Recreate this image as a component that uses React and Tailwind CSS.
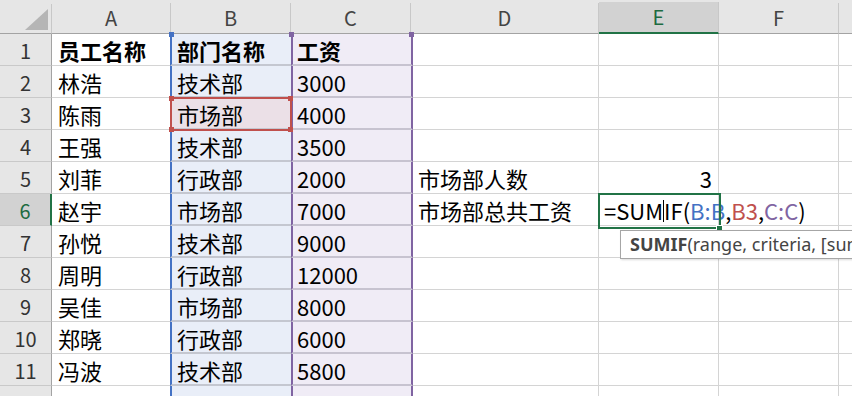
import React from "react";

const data = [
  ["员工名称", "部门名称", "工资"],
  ["林浩", "技术部", "3000"],
  ["陈雨", "市场部", "4000"],
  ["王强", "技术部", "3500"],
  ["刘菲", "行政部", "2000"],
  ["赵宇", "市场部", "7000"],
  ["孙悦", "技术部", "9000"],
  ["周明", "行政部", "12000"],
  ["吴佳", "市场部", "8000"],
  ["郑晓", "行政部", "6000"],
  ["冯波", "技术部", "5800"],
  ["", "", ""],
];

function ColHeader({ label, w, active }) {
  return (
    <div className={`${w} h-[34px] shrink-0 flex flex-col`}>
      <div className="h-[4px]" />
      <div
        className={`flex-1 flex items-center justify-center text-[20px] border-r border-r-[#c8c8c8] ${
          active
            ? "bg-[#d2d2d2] text-[#1e6b41] border-b-2 border-b-[#217346]"
            : "text-[#444] border-b border-b-[#a3a3a3]"
        }`}
      >
        {label}
      </div>
    </div>
  );
}

function Row({ n, cells }) {
  const bold = n === 1;
  const active = n === 6;
  const txt = `flex items-center pt-[2px] whitespace-nowrap text-[22px] text-black ${bold ? "font-bold" : ""}`;
  return (
    <div className="flex h-[32px]">
      <div
        className={`w-[52px] shrink-0 flex items-center justify-center pt-[2px] text-[20px] border-b border-b-[#c9c9c9] ${
          active
            ? "bg-[#d2d2d2] text-[#1e6b41] border-r-2 border-r-[#217346]"
            : "bg-[#e6e6e6] text-[#333] border-r border-r-[#a3a3a3]"
        }`}
      >
        {n}
      </div>
      <div className={`w-[118px] shrink-0 pl-[6px] border-b border-b-[#d4d4d4] ${txt}`}>{cells[0]}</div>
      <div
        className={`w-[121px] shrink-0 pl-[5px] border-l-2 border-l-[#4472c4] border-b-2 border-b-[#c4c7d0] ${
          n === 3 ? "bg-[#ebe0e7]" : "bg-[#e9eef8]"
        } ${txt}`}
      >
        {cells[1]}
      </div>
      <div className={`w-[122px] shrink-0 pl-[4px] bg-[#f0ecf6] border-x-2 border-x-[#8064a2] border-b-2 border-b-[#c7c3d0] ${txt}`}>
        {cells[2]}
      </div>
      <div className={`w-[186px] shrink-0 pl-[5px] border-r border-b border-[#d4d4d4] ${txt}`}>
        {n === 5 ? "市场部人数" : n === 6 ? "市场部总共工资" : ""}
      </div>
      <div className={`w-[120px] shrink-0 border-r border-b border-[#d4d4d4] ${txt} ${n === 5 ? "justify-end pr-[6px]" : "pl-[5px]"} relative z-10`}>
        {n === 5 && "3"}
        {n === 6 && (
          <span className="flex items-center">
            <span>=SUM</span>
            <span className="w-px h-[22px] bg-black" />
            <span>IF(</span>
            <span className="text-[#4472c4]">B:B</span>
            <span>,</span>
            <span className="text-[#c0504d]">B3</span>
            <span>,</span>
            <span className="text-[#8064a2]">C:C</span>
            <span>)</span>
          </span>
        )}
      </div>
      <div className={`w-[120px] shrink-0 border-r border-b border-[#d4d4d4] ${txt}`} />
      <div className="flex-1 border-b border-[#d4d4d4]" />
    </div>
  );
}

export default function App() {
  return (
    <div className="relative w-[852px] h-[396px] overflow-hidden bg-white font-['Noto_Sans_CJK_SC','Noto_Sans',sans-serif]">
      <div className="flex bg-[#e6e6e6]">
        <div className="w-[52px] h-[34px] shrink-0 flex flex-col">
          <div className="h-[4px]" />
          <div className="flex-1 border-r border-r-[#c8c8c8] border-b border-b-[#a3a3a3]">
            <svg width="51" height="29" viewBox="0 4 51 29">
              <polygon points="48,9 48,30 25,30" fill="#b5b5b5" />
            </svg>
          </div>
        </div>
        <ColHeader label="A" w="w-[119px]" />
        <ColHeader label="B" w="w-[120px]" />
        <ColHeader label="C" w="w-[120px]" />
        <ColHeader label="D" w="w-[188px]" />
        <ColHeader label="E" w="w-[120px]" active />
        <ColHeader label="F" w="w-[120px]" />
        <div className="flex-1 h-[34px] flex flex-col">
          <div className="h-[4px]" />
          <div className="flex-1 border-b border-b-[#a3a3a3]" />
        </div>
      </div>

      {data.map((cells, i) => (
        <Row key={i} n={i + 1} cells={cells} />
      ))}

      {/* range handles */}
      <div className="absolute left-[169px] top-[32px] w-[5px] h-[5px] bg-[#4472c4]" />
      <div className="absolute left-[289px] top-[32px] w-[5px] h-[5px] bg-[#8064a2]" />
      <div className="absolute left-[409px] top-[32px] w-[5px] h-[5px] bg-[#8064a2]" />

      {/* B3 reference box */}
      <div className="absolute left-[170px] top-[97px] w-[122px] h-[34px] border-2 border-[#c0504d]" />
      <div className="absolute left-[169px] top-[96px] w-[5px] h-[5px] bg-[#c0504d]" />
      <div className="absolute left-[288px] top-[96px] w-[5px] h-[5px] bg-[#c0504d]" />
      <div className="absolute left-[169px] top-[127px] w-[5px] h-[5px] bg-[#c0504d]" />
      <div className="absolute left-[288px] top-[127px] w-[5px] h-[5px] bg-[#c0504d]" />

      {/* active cell */}
      <div className="absolute left-[598px] top-[193px] w-[123px] h-[36px] border-2 border-[#217346] z-20" />
      <div className="absolute left-[716px] top-[225px] w-[7px] h-[7px] bg-[#217346] border border-white z-20" />

      {/* function tooltip */}
      <div className="absolute left-[620px] top-[230px] w-[320px] h-[29px] bg-white border border-[#a6a6a6] shadow-[1px_1px_2px_rgba(0,0,0,0.15)] z-30 flex items-center pl-[9px] text-[18px] text-[#444] whitespace-nowrap font-['Noto_Sans',sans-serif]">
        <span className="font-bold">SUMIF</span>
        <span>(range, criteria, [sum_range])</span>
      </div>
    </div>
  );
}
